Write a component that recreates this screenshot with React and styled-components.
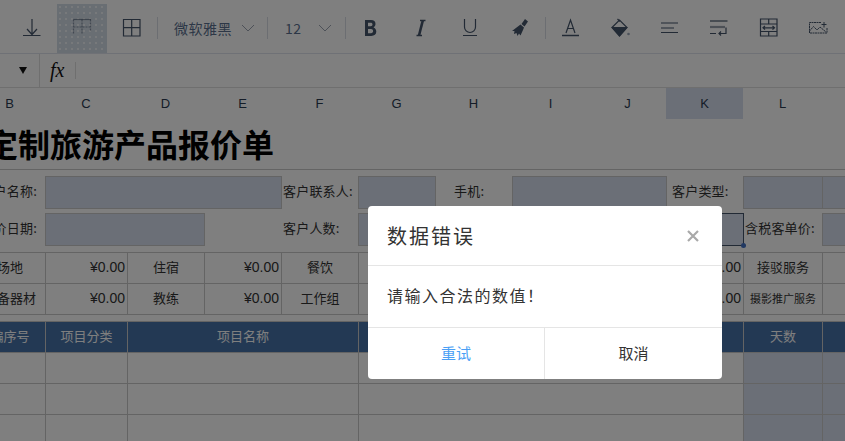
import React from "react";
import styled, { createGlobalStyle } from "styled-components";

const GlobalStyle = createGlobalStyle`
  html, body {
    margin: 0;
    padding: 0;
    background: #fff;
    overflow: hidden;
  }
  body {
    font-family: "Liberation Sans", "Noto Sans CJK SC", sans-serif;
  }
`;

const COLUMNS = "71px 82px 77px 77px 77px 77px 77px 77px 77px 77px 79px 80px 80px";
const CJK = `"Noto Sans CJK SC", "Liberation Sans", sans-serif`;
const LINE = "#c9c9c9";
const FILL = "#d6deee";
const INK = "#44546a";

const Page = styled.div`
  position: relative;
  width: 845px;
  height: 441px;
  overflow: hidden;
  background: #fff;
`;

const Toolbar = styled.div`
  display: flex;
  align-items: flex-end;
  height: 53px;
  padding-left: 7px;
  border-bottom: 1px solid #dfe3ec;
`;

const IconButton = styled.div`
  display: flex;
  align-items: center;
  justify-content: center;
  flex: none;
  width: 50px;
  height: 49px;
  padding-bottom: 1px;
  box-sizing: border-box;
  color: ${INK};
  ${(p) =>
    p.$active &&
    `
    background-color: #d3dce6;
    background-image: radial-gradient(#eef2f6 0.8px, transparent 1px);
    background-size: 6px 6px;
  `}
`;

const Divider = styled.div`
  flex: none;
  width: 1px;
  height: 22px;
  margin: 0 -1px 14px 0;
  background: #d8dce4;
`;

const Select = styled.div`
  display: flex;
  align-items: center;
  justify-content: space-between;
  flex: none;
  box-sizing: border-box;
  width: ${(p) => p.$width}px;
  height: 49px;
  padding: 0 ${(p) => p.$right}px 1px ${(p) => p.$left}px;
  font-family: ${CJK};
  font-size: 14px;
  letter-spacing: 0.5px;
  color: #5a6f8e;
`;

const FormulaBar = styled.div`
  display: flex;
  align-items: center;
  height: 33px;
  border-bottom: 1px solid #dedede;
`;

const NameBox = styled.div`
  display: flex;
  align-items: center;
  justify-content: flex-end;
  box-sizing: border-box;
  width: 40px;
  height: 100%;
  padding-right: 11px;
  border-right: 1px solid #dedede;
`;

const Fx = styled.div`
  width: 36px;
  box-sizing: border-box;
  padding-left: 10px;
  font-family: "Liberation Serif", serif;
  font-size: 20px;
  font-style: italic;
  color: #111;
  border-right: 1px solid #dedede;
  line-height: 17px;
`;

const ColumnHeader = styled.div`
  display: grid;
  grid-template-columns: ${COLUMNS};
  height: 31px;
  margin-left: -26px;
  width: 950px;
`;

const ColumnLetter = styled.div`
  display: flex;
  align-items: center;
  justify-content: center;
  padding-bottom: 1px;
  font-size: 13px;
  color: #2a3a50;
  background: ${(p) => (p.$selected ? FILL : "transparent")};
`;

const Sheet = styled.div`
  display: grid;
  grid-template-columns: ${COLUMNS};
  grid-template-rows: 51px 6px 33px 4px 33px 7px 31px 31px 7px 31px 31px 31px 31px;
  margin-left: -25px;
  width: 950px;
`;

const place = (p) => `
  grid-column: ${p.$col} / span ${p.$span || 1};
  grid-row: ${p.$row};
`;

const Title = styled.div`
  ${place}
  display: flex;
  align-items: center;
  padding-left: 11px;
  padding-bottom: 3px;
  font-family: ${CJK};
  font-size: 32px;
  font-weight: 700;
  color: #000;
  white-space: nowrap;
  border-bottom: 1px solid ${LINE};
`;

const Rule = styled.div`
  ${place}
  border-bottom: 1px solid ${LINE};
`;

const Label = styled.div`
  ${place}
  display: flex;
  align-items: center;
  justify-content: ${(p) => (p.$end ? "flex-end" : "flex-start")};
  padding: ${(p) => (p.$end ? "0 9px 4px 0" : `0 0 4px ${p.$pad || 0}px`)};
  font-family: ${CJK};
  font-size: 13px;
  letter-spacing: 0.2px;
  color: #333;
  white-space: nowrap;
`;

const Field = styled.div`
  ${place}
  position: relative;
  margin-left: -1px;
  background: ${FILL};
  border: 1px solid ${(p) => (p.$selected ? "#44546a" : "#c9c9c9")};
`;

const Handle = styled.span`
  position: absolute;
  right: -3px;
  bottom: -3px;
  width: 5px;
  height: 5px;
  border-radius: 50%;
  background: #4472c4;
`;

const Cell = styled.div`
  ${place}
  display: flex;
  align-items: center;
  justify-content: ${(p) => (p.$money ? "flex-end" : "center")};
  box-sizing: border-box;
  padding: 0 ${(p) => (p.$money ? "2px" : "0")} 3px 0;
  font-family: ${(p) => (p.$money ? `"Liberation Sans", sans-serif` : CJK)};
  font-size: ${(p) => p.$size || (p.$money ? 14 : 13)}px;
  color: #333;
  white-space: nowrap;
  background: ${(p) => (p.$filled ? FILL : "transparent")};
  border-right: 1px solid ${LINE};
  border-bottom: 1px solid ${LINE};
`;

const HeadCell = styled(Cell)`
  color: #fff;
  background: #4772a8;
`;

const Backdrop = styled.div`
  position: absolute;
  inset: 0;
  background: rgba(0, 0, 0, 0.5);
`;

const Dialog = styled.div`
  position: absolute;
  left: 368px;
  top: 206px;
  width: 354px;
  height: 173px;
  display: flex;
  flex-direction: column;
  background: #fff;
  border-radius: 4px;
  font-family: ${CJK};
  color: #333;
`;

const DialogHead = styled.div`
  display: flex;
  align-items: center;
  justify-content: space-between;
  box-sizing: border-box;
  height: 60px;
  padding: 0 22px 0 19px;
  border-bottom: 1px solid #e5e5e5;
`;

const DialogTitle = styled.div`
  font-size: 20px;
  letter-spacing: 2px;
`;

const Close = styled.div`
  display: flex;
  color: #a9a9a9;
`;

const DialogBody = styled.div`
  display: flex;
  align-items: center;
  box-sizing: border-box;
  height: 62px;
  padding: 0 0 3px 19px;
  font-size: 16px;
  letter-spacing: 1.5px;
  border-bottom: 1px solid #e5e5e5;
`;

const DialogFoot = styled.div`
  display: grid;
  grid-template-columns: 177px 1fr;
  flex: 1;
`;

const DialogButton = styled.div`
  display: flex;
  align-items: center;
  justify-content: center;
  padding-bottom: 3px;
  font-size: 15px;
  color: ${(p) => (p.$primary ? "#4a9ff5" : "#333")};
  border-right: ${(p) => (p.$primary ? "1px solid #e5e5e5" : "none")};
`;

const Icon = ({ children, fill = "none", w = 1.2 }) => (
  <svg width="24" height="24" viewBox="0 0 24 24" fill={fill} stroke="currentColor" strokeWidth={w}>
    {children}
  </svg>
);

const Chevron = () => (
  <svg width="14" height="8" viewBox="0 0 14 8" fill="none" stroke="#9aa3b0" strokeWidth="1">
    <path d="M1 1l6 6 6-6" />
  </svg>
);

const Download = () => (
  <Icon>
    <path d="M12 3v15.5M7 13l5 5.5 5-5.5M3 19.5h17.5" />
  </Icon>
);

const FrozenGrid = () => (
  <Icon>
    <path d="M3.5 3.5h17.5" opacity="0.6" />
    <path d="M3.5 3.5v15M12 3.5v15M20.5 3.5v12M3.5 11h17" strokeDasharray="2 1" opacity="0.55" />
  </Icon>
);

const TableGrid = () => (
  <Icon>
    <path d="M3.5 3.5h16.5v16.5H3.5zM11.7 3.5v16.5M3.5 11.7h16.5" />
  </Icon>
);

const Bold = () => (
  <svg width="24" height="24" viewBox="0 0 24 24" fill="currentColor">
    <path
      fillRule="evenodd"
      d="M7 4h6c3 0 4.5 1.5 4.5 4 0 1.6-.8 2.8-2 3.4 1.6.6 2.8 2 2.8 4.2 0 2.9-2 4.4-5 4.4H7zM10 6.8v3.4h2.6c1.2 0 1.9-.6 1.9-1.7s-.7-1.7-1.9-1.7zM10 13v4.2h3c1.3 0 2.1-.8 2.1-2.1S14.3 13 13 13z"
    />
  </svg>
);

const Italic = () => (
  <Icon w={1.4}>
    <path d="M12 4.5h5.5M8.5 19.5h5.5" />
    <path d="M14.8 4.5l-3.8 15" strokeWidth="2.6" />
  </Icon>
);

const Underline = () => (
  <Icon>
    <path d="M6.5 3v8a5.5 5.5 0 0 0 11 0V3M5 19.5h14" />
  </Icon>
);

const Brush = () => (
  <svg width="24" height="24" viewBox="0 0 24 24" fill="currentColor">
    <path d="M17 3l3 2.5-3.5 5-3-2.5z" />
    <path d="M12.5 8.5l3.5 3-1 2.5-2.5 5.5-1.5-2-1.5 2.5-1-3-2.5 1 .5-3-2.5 0z" />
  </svg>
);

const FontColor = () => (
  <Icon>
    <path d="M8 17L12.5 4 17 17M9.4 12.5h6.2" />
    <path d="M4 19.5h17" strokeWidth="1.5" />
  </Icon>
);

const FillColor = () => (
  <Icon>
    <path d="M9.5 3L12 5.5M4 11.5L11.5 4 19 11.5 11.5 20z" />
    <path d="M4.5 11.5h14L11.5 19.5z" fill="currentColor" />
    <circle cx="20.5" cy="18" r="1.3" fill="#9aa6b8" stroke="none" />
  </Icon>
);

const AlignLines = () => (
  <Icon>
    <path d="M3 7h17M3 12h13M3 16.5h17" />
  </Icon>
);

const WrapText = () => (
  <Icon>
    <path d="M2 5h17.5" />
    <path d="M2 11h15" strokeWidth="2.2" opacity="0.55" />
    <path d="M2 17.5h6M18 11.5v6h-7M13 15.5l-2 2 2 2" />
  </Icon>
);

const ColumnWidth = () => (
  <Icon>
    <path d="M2.5 3h16.5v17H2.5zM2.5 8h16.5M2.5 15.5h16.5M10.7 3v5M10.7 15.5V20M5.5 11.8h10.5M7 10l-2 1.8L7 13.6M14.5 10l2 1.8-2 1.8" />
  </Icon>
);

const Picture = () => (
  <Icon w={1}>
    <path d="M13 6.5H1.5v10.5H19V12M1.5 15l4-4.5 3.5 3.5 3-3 6 5" strokeDasharray="2 0.5" />
    <path d="M16 6v5.5M13.5 8.5h5" />
  </Icon>
);

const CloseIcon = () => (
  <svg width="14" height="14" viewBox="0 0 14 14" fill="none" stroke="currentColor" strokeWidth="2.2">
    <path d="M2 2l10 10M12 2L2 12" />
  </svg>
);

const LETTERS = ["B", "C", "D", "E", "F", "G", "H", "I", "J", "K", "L", "M", ""];

const App = () => {
  const bodyRows = [11, 12, 13];
  return (
    <Page>
      <GlobalStyle />
      <Toolbar>
        <IconButton><Download /></IconButton>
        <IconButton $active><FrozenGrid /></IconButton>
        <IconButton><TableGrid /></IconButton>
        <Divider />
        <Select $width={110} $left={17} $right={12}>
          微软雅黑
          <Chevron />
        </Select>
        <Divider />
        <Select $width={78} $left={18} $right={13}>
          12
          <Chevron />
        </Select>
        <Divider />
        <IconButton><Bold /></IconButton>
        <IconButton><Italic /></IconButton>
        <IconButton><Underline /></IconButton>
        <IconButton><Brush /></IconButton>
        <Divider />
        <IconButton><FontColor /></IconButton>
        <IconButton><FillColor /></IconButton>
        <IconButton><AlignLines /></IconButton>
        <IconButton><WrapText /></IconButton>
        <IconButton><ColumnWidth /></IconButton>
        <IconButton><Picture /></IconButton>
      </Toolbar>

      <FormulaBar>
        <NameBox>
          <svg width="10" height="7" viewBox="0 0 10 7" fill="#111">
            <path d="M1 0h8L5 7z" />
          </svg>
        </NameBox>
        <Fx>fx</Fx>
      </FormulaBar>

      <ColumnHeader>
        {LETTERS.map((letter) => (
          <ColumnLetter key={letter} $selected={letter === "K"}>
            {letter}
          </ColumnLetter>
        ))}
      </ColumnHeader>

      <Sheet>
        <Title $col={1} $span={13} $row={1}>定制旅游产品报价单</Title>

        <Label $col={1} $row={3} $end>客户名称:</Label>
        <Field $col={2} $span={3} $row={3} />
        <Label $col={5} $row={3} $pad={1}>客户联系人:</Label>
        <Field $col={6} $row={3} />
        <Label $col={7} $row={3} $pad={18}>手机:</Label>
        <Field $col={8} $span={2} $row={3} />
        <Label $col={10} $row={3} $pad={5}>客户类型:</Label>
        <Field $col={11} $row={3} />
        <Field $col={12} $span={2} $row={3} />

        <Label $col={1} $row={5} $end>报价日期:</Label>
        <Field $col={2} $span={2} $row={5} />
        <Label $col={5} $row={5} $pad={1}>客户人数:</Label>
        <Field $col={6} $row={5} />
        <Field $col={10} $row={5} $selected>
          <Handle />
        </Field>
        <Label $col={11} $row={5} $pad={1}>含税客单价:</Label>
        <Field $col={12} $span={2} $row={5} />

        <Rule $col={1} $span={13} $row={6} />

        <Cell $col={1} $row={7}>场地</Cell>
        <Cell $col={2} $row={7} $money>¥0.00</Cell>
        <Cell $col={3} $row={7}>住宿</Cell>
        <Cell $col={4} $row={7} $money>¥0.00</Cell>
        <Cell $col={5} $row={7}>餐饮</Cell>
        <Cell $col={6} $span={5} $row={7} $money>¥0.00</Cell>
        <Cell $col={11} $row={7}>接驳服务</Cell>
        <Cell $col={12} $span={2} $row={7} />

        <Cell $col={1} $row={8}>装备器材</Cell>
        <Cell $col={2} $row={8} $money>¥0.00</Cell>
        <Cell $col={3} $row={8}>教练</Cell>
        <Cell $col={4} $row={8} $money>¥0.00</Cell>
        <Cell $col={5} $row={8}>工作组</Cell>
        <Cell $col={6} $span={5} $row={8} $money>¥0.00</Cell>
        <Cell $col={11} $row={8} $size={11}>摄影推广服务</Cell>
        <Cell $col={12} $span={2} $row={8} />

        <Rule $col={1} $span={13} $row={9} />

        <HeadCell $col={1} $row={10}>编序号</HeadCell>
        <HeadCell $col={2} $row={10}>项目分类</HeadCell>
        <HeadCell $col={3} $span={3} $row={10}>项目名称</HeadCell>
        <HeadCell $col={6} $span={5} $row={10} />
        <HeadCell $col={11} $row={10}>天数</HeadCell>
        <HeadCell $col={12} $span={2} $row={10} />

        {bodyRows.map((row) => (
          <React.Fragment key={row}>
            <Cell $col={1} $row={row} />
            <Cell $col={2} $row={row} />
            <Cell $col={3} $span={3} $row={row} />
            <Cell $col={6} $span={5} $row={row} />
            <Cell $col={11} $row={row} $filled />
            <Cell $col={12} $span={2} $row={row} $filled />
          </React.Fragment>
        ))}
      </Sheet>

      <Backdrop />

      <Dialog>
        <DialogHead>
          <DialogTitle>数据错误</DialogTitle>
          <Close><CloseIcon /></Close>
        </DialogHead>
        <DialogBody>请输入合法的数值！</DialogBody>
        <DialogFoot>
          <DialogButton $primary>重试</DialogButton>
          <DialogButton>取消</DialogButton>
        </DialogFoot>
      </Dialog>
    </Page>
  );
};

export default App;
